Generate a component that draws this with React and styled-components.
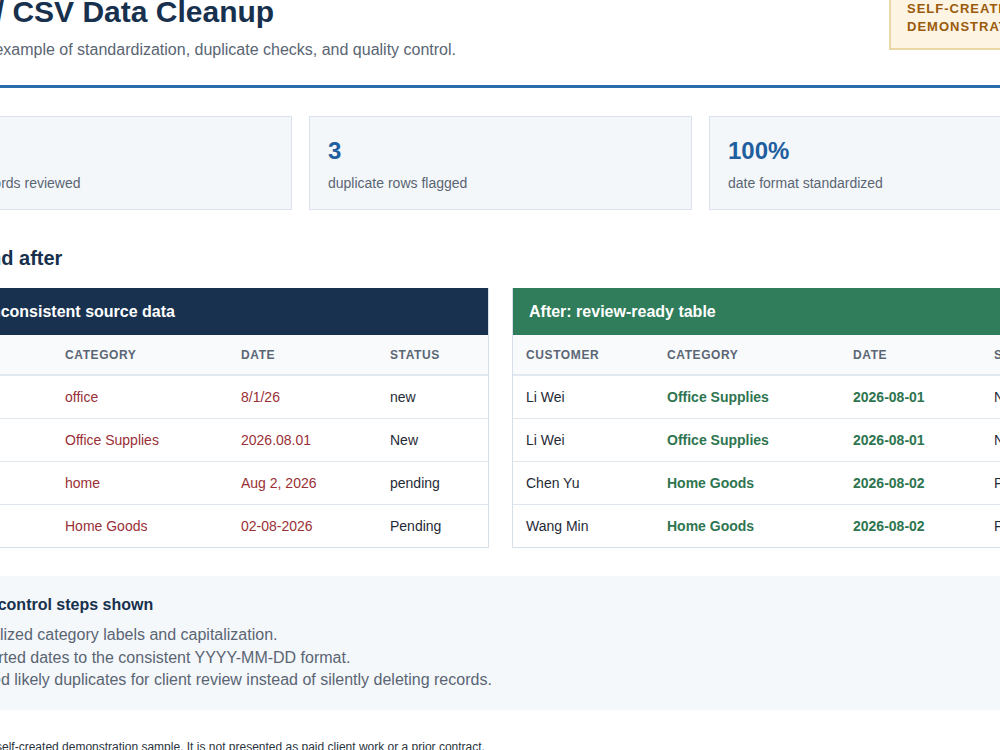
import React from "react";
import styled, { createGlobalStyle } from "styled-components";

const Global = createGlobalStyle`
  html, body { margin: 0; padding: 0; background: #fff; overflow: hidden; }
  body { font-family: "Liberation Sans", Arial, sans-serif; color: #1b2b3c; }
`;

const Page = styled.div`
  width: 1183px;
  margin: -6px 0 0 -91px;
`;

const Header = styled.header`
  display: flex;
  justify-content: space-between;
  align-items: flex-start;
  padding-bottom: 26px;
  border-bottom: 3px solid #2a6cae;
`;

const Title = styled.h1`
  margin: 0;
  font-size: 30px;
  line-height: 36px;
  color: #17304d;
`;

const Sub = styled.p`
  margin: 11px 0 0;
  font-size: 16px;
  color: #5a6573;
`;

const Badge = styled.div`
  margin-top: -10px;
  width: 203px;
  box-sizing: border-box;
  padding: 14px 16px 12px;
  background: #fdf4e3;
  border: 2px solid #ecd7a8;
  color: #9a5b0d;
  font-size: 13px;
  font-weight: 700;
  letter-spacing: 1px;
  line-height: 18px;
  text-align: left;
`;

const Cards = styled.div`
  display: grid;
  grid-template-columns: repeat(3, 1fr);
  gap: 17px;
  margin-top: 28px;
`;

const Card = styled.div`
  height: 94px;
  box-sizing: border-box;
  background: #f4f7fa;
  border: 1px solid #dbe4ee;
  padding: 20px 18px;
`;

const Num = styled.div`
  font-size: 24px;
  font-weight: 700;
  color: #1f5f9f;
  line-height: 28px;
`;

const Label = styled.div`
  margin-top: 10px;
  font-size: 14px;
  color: #5a6573;
`;

const H2 = styled.h2`
  margin: 36px 0 18px;
  font-size: 20px;
  line-height: 24px;
  color: #17304d;
`;

const Tables = styled.div`
  display: grid;
  grid-template-columns: 1fr 1fr;
  gap: 23px;
`;

const Panel = styled.div`
  border: 1px solid #d7e0ea;
  border-top: none;
`;

const PanelHead = styled.div`
  background: ${(p) => p.$bg};
  color: #fff;
  font-size: 16px;
  font-weight: 700;
  height: 47px;
  display: flex;
  align-items: center;
  padding: 0 16px;
`;

const Table = styled.table`
  width: 100%;
  border-collapse: collapse;
  table-layout: fixed;
`;

const Th = styled.th`
  text-align: left;
  font-size: 12px;
  font-weight: 700;
  letter-spacing: 0.6px;
  color: #5b6675;
  text-transform: uppercase;
  background: #f8fafc;
  height: 39px;
  padding: 0 13px;
  border-bottom: 2px solid #e2e9f0;
`;

const Td = styled.td`
  font-size: 14px;
  height: 42px;
  padding: 0 13px;
  border-top: 1px solid #dfe6ee;
  color: ${(p) => (p.$tone === "bad" ? "#9a2f36" : p.$tone === "good" ? "#2e7550" : "#1f2a37")};
  font-weight: ${(p) => (p.$tone === "good" ? 700 : 400)};
`;

const Note = styled.div`
  margin-top: 28px;
  background: #f5f8fb;
  padding: 20px 30px 18px;
`;

const NoteTitle = styled.h3`
  margin: 0 0 10px;
  font-size: 16px;
  color: #17304d;
`;

const List = styled.ul`
  margin: 0;
  padding-left: 13px;
  color: #5a6573;
  font-size: 16px;
  line-height: 22.5px;
`;

const Foot = styled.p`
  margin: 30px 0 0;
  padding-left: 11px;
  font-size: 12px;
  color: #2a3440;
`;

const before = [
  ["li wei", "office", "8/1/26", "new"],
  ["LI WEI ", "Office Supplies", "2026.08.01", "New"],
  ["chen yu", "home", "Aug 2, 2026", "pending"],
  ["Wang min", "Home Goods", "02-08-2026", "Pending"],
];
const after = [
  ["Li Wei", "Office Supplies", "2026-08-01", "New"],
  ["Li Wei", "Office Supplies", "2026-08-01", "New"],
  ["Chen Yu", "Home Goods", "2026-08-02", "Pending"],
  ["Wang Min", "Home Goods", "2026-08-02", "Pending"],
];

function DataTable({ head, bg, rows, widths, tones }) {
  return (
    <Panel>
      <PanelHead $bg={bg}>{head}</PanelHead>
      <Table>
        <colgroup>
          {widths.map((w, i) => (
            <col key={i} style={{ width: w }} />
          ))}
        </colgroup>
        <thead>
          <tr>
            {["Customer", "Category", "Date", "Status"].map((h) => (
              <Th key={h}>{h}</Th>
            ))}
          </tr>
        </thead>
        <tbody>
          {rows.map((r, i) => (
            <tr key={i}>
              {r.map((c, j) => (
                <Td key={j} $tone={tones[j]}>{c}</Td>
              ))}
            </tr>
          ))}
        </tbody>
      </Table>
    </Panel>
  );
}

export default function App() {
  return (
    <>
      <Global />
      <Page>
        <Header>
          <div>
            <Title>Excel / CSV Data Cleanup</Title>
            <Sub>A hands-on example of standardization, duplicate checks, and quality control.</Sub>
          </div>
          <Badge>SELF-CREATED<br />DEMONSTRATION</Badge>
        </Header>
        <Cards>
          <Card><Num>24</Num><Label>source records reviewed</Label></Card>
          <Card><Num>3</Num><Label>duplicate rows flagged</Label></Card>
          <Card><Num>100%</Num><Label>date format standardized</Label></Card>
        </Cards>
        <H2>Before and after</H2>
        <Tables>
          <DataTable
            head="Before: inconsistent source data"
            bg="#17314f"
            rows={before}
            widths={["142px", "176px", "149px", "auto"]}
            tones={["", "bad", "bad", ""]}
          />
          <DataTable
            head="After: review-ready table"
            bg="#2f7d5a"
            rows={after}
            widths={["141px", "186px", "141px", "auto"]}
            tones={["", "good", "good", ""]}
          />
        </Tables>
        <Note>
          <NoteTitle>Quality control steps shown</NoteTitle>
          <List>
            <li>Normalized category labels and capitalization.</li>
            <li>Converted dates to the consistent YYYY-MM-DD format.</li>
            <li>Flagged likely duplicates for client review instead of silently deleting records.</li>
          </List>
        </Note>
        <Foot>Note: this is a self-created demonstration sample. It is not presented as paid client work or a prior contract.</Foot>
      </Page>
    </>
  );
}
